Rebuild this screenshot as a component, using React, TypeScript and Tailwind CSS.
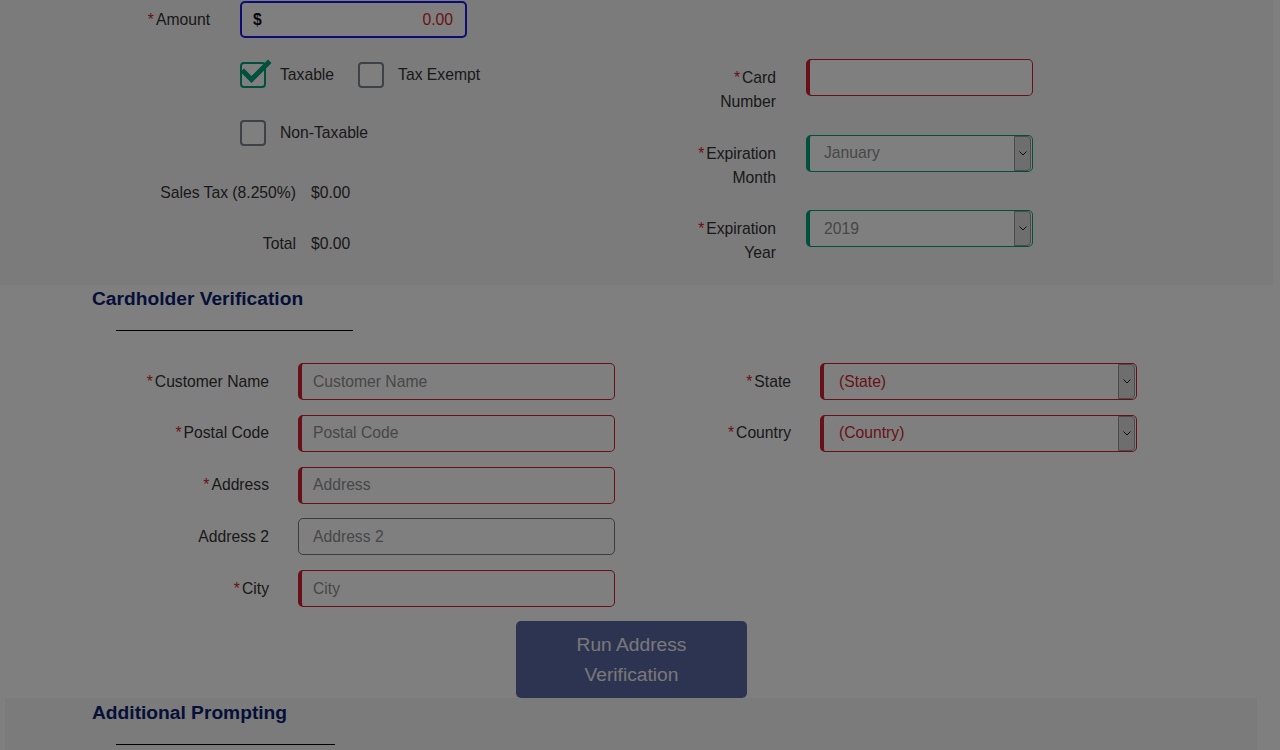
import React from 'react';

const Req = () => <span className="text-[#d21f30] pr-[2px]">*</span>;

const Chevron = () => (
  <svg width="8" height="5" viewBox="0 0 8 5" fill="none">
    <path d="M0.5 0.5 L4 4 L7.5 0.5" stroke="#222" strokeWidth="1" />
  </svg>
);

const Checkbox = ({ checked, label }: { checked?: boolean; label: string }) => (
  <div className="flex items-center h-[26px]">
    <div className="relative">
      <div
        className={
          checked
            ? 'w-[26px] h-[26px] rounded-[4px] border-2 border-[#00a078] bg-white'
            : 'w-[26px] h-[26px] rounded-[4px] border-2 border-[#7c828a] bg-white'
        }
      />
      {checked && (
        <svg className="absolute left-[2px] top-[-3px]" width="30" height="26" viewBox="0 0 30 26">
          <path d="M2 13 L9.5 20.5 L26 4" fill="none" stroke="#00a078" strokeWidth="5" strokeLinecap="square" />
        </svg>
      )}
    </div>
    <span className="ml-[14px]">{label}</span>
  </div>
);

const TextField = ({ placeholder, required = true, width = 'w-[317px]' }: { placeholder: string; required?: boolean; width?: string }) => (
  <div
    className={
      required
        ? `${width} h-[37px] rounded-[5px] border border-l-[4px] border-[#d21f30] bg-white flex items-center pl-[11px] text-[#8e8e8e]`
        : `${width} h-[37px] rounded-[5px] border border-[#7a7a7a] bg-white flex items-center pl-[14px] text-[#8e8e8e]`
    }
  >
    {placeholder}
  </div>
);

const SelectField = ({ value, tone }: { value: string; tone: 'red' | 'green' }) => (
  <div
    className={
      tone === 'red'
        ? 'w-[317px] h-[37px] rounded-[5px] border border-l-[4px] border-[#d21f30] bg-white flex items-center justify-between pl-[15px] pr-px text-[#d21f30]'
        : 'w-[227px] h-[37px] rounded-[5px] border border-l-[4px] border-[#00a078] bg-white flex items-center justify-between pl-[14px] pr-px text-[#8e8e8e]'
    }
  >
    <span>{value}</span>
    <div className="w-[17px] h-[35px] bg-[#dcdcdc] border border-[#969696] rounded-r-[4px] flex items-center justify-center">
      <Chevron />
    </div>
  </div>
);

const Row = ({ label, children }: { label: React.ReactNode; children: React.ReactNode }) => (
  <div className="flex items-center h-[37px]">
    <div className="w-[269px] text-right">{label}</div>
    <div className="ml-[29px]">{children}</div>
  </div>
);

const RightRow = ({ label, children }: { label: React.ReactNode; children: React.ReactNode }) => (
  <div className="flex items-start h-[54px]">
    <div className="w-[90px] text-right pt-[7px] leading-[24px]">{label}</div>
    <div className="ml-[30px]">{children}</div>
  </div>
);

export default function App() {
  return (
    <div className="relative h-[750px] overflow-hidden bg-white text-[15.7px] leading-[24px] text-[#333] font-['Liberation_Sans',Arial,sans-serif]">
      {/* payment panel */}
      <div className="w-[1273px] h-[285px] bg-[#f6f6f6] flex">
        <div className="w-[640px] flex flex-col">
          <div className="mt-px flex items-center h-[37px]">
            <div className="w-[210px] text-right">
              <Req />Amount
            </div>
            <div className="ml-[30px] w-[227px] h-[37px] border-2 border-[#1818e8] rounded-[5px] bg-white flex items-center justify-between pl-[11px] pr-[12px]">
              <span className="font-bold text-[#111]">$</span>
              <span className="text-[#d21f30]">0.00</span>
            </div>
          </div>
          <div className="mt-[24px] pl-[240px] flex">
            <Checkbox checked label="Taxable" />
            <div className="ml-[24px]">
              <Checkbox label="Tax Exempt" />
            </div>
          </div>
          <div className="mt-[32px] pl-[240px] flex">
            <Checkbox label="Non-Taxable" />
          </div>
          <div className="mt-[35px] flex">
            <div className="w-[296px] text-right">Sales Tax (8.250%)</div>
            <div className="ml-[15px]">$0.00</div>
          </div>
          <div className="mt-[27px] flex">
            <div className="w-[296px] text-right">Total</div>
            <div className="ml-[15px]">$0.00</div>
          </div>
        </div>
        <div className="ml-[46px] pt-[59px] flex flex-col gap-[21.5px]">
          <RightRow label={<><Req />Card Number</>}>
            <div className="w-[227px] h-[37px] rounded-[5px] border border-l-[4px] border-[#d21f30] bg-white" />
          </RightRow>
          <RightRow label={<><Req />Expiration Month</>}>
            <SelectField value="January" tone="green" />
          </RightRow>
          <RightRow label={<><Req />Expiration Year</>}>
            <SelectField value="2019" tone="green" />
          </RightRow>
        </div>
      </div>

      {/* cardholder verification */}
      <h2 className="mt-[3px] pl-[92px] text-[19.2px] leading-[22px] font-bold text-[#0a2070]">Cardholder Verification</h2>
      <div className="mt-[20px] ml-[116px] w-[237px] h-px bg-black" />
      <div className="mt-[32px] flex">
        <div className="flex flex-col gap-[14.75px]">
          <Row label={<><Req />Customer Name</>}>
            <TextField placeholder="Customer Name" />
          </Row>
          <Row label={<><Req />Postal Code</>}>
            <TextField placeholder="Postal Code" />
          </Row>
          <Row label={<><Req />Address</>}>
            <TextField placeholder="Address" />
          </Row>
          <Row label="Address 2">
            <TextField placeholder="Address 2" required={false} />
          </Row>
          <Row label={<><Req />City</>}>
            <TextField placeholder="City" />
          </Row>
        </div>
        <div className="ml-[56px] flex flex-col gap-[14.75px]">
          <div className="flex items-center h-[37px]">
            <div className="w-[120px] text-right">
              <Req />State
            </div>
            <div className="ml-[29px]">
              <SelectField value="(State)" tone="red" />
            </div>
          </div>
          <div className="flex items-center h-[37px]">
            <div className="w-[120px] text-right">
              <Req />Country
            </div>
            <div className="ml-[29px]">
              <SelectField value="(Country)" tone="red" />
            </div>
          </div>
        </div>
      </div>
      <button className="mt-[14px] ml-[516px] w-[231px] h-[77px] rounded-[5px] bg-[#5a68a4] text-[#f0f0f0] text-[19.2px] leading-[30px] block">
        Run Address
        <br />
        Verification
      </button>

      {/* additional prompting */}
      <div className="ml-[5px] w-[1252px] h-[200px] bg-[#f6f6f6] pt-[4px]">
        <h2 className="pl-[87px] text-[19.2px] leading-[22px] font-bold text-[#0a2070]">Additional Prompting</h2>
        <div className="mt-[20px] ml-[111px] w-[219px] h-px bg-black" />
      </div>

      {/* modal backdrop */}
      <div className="fixed inset-0 bg-black/50" />
    </div>
  );
}
